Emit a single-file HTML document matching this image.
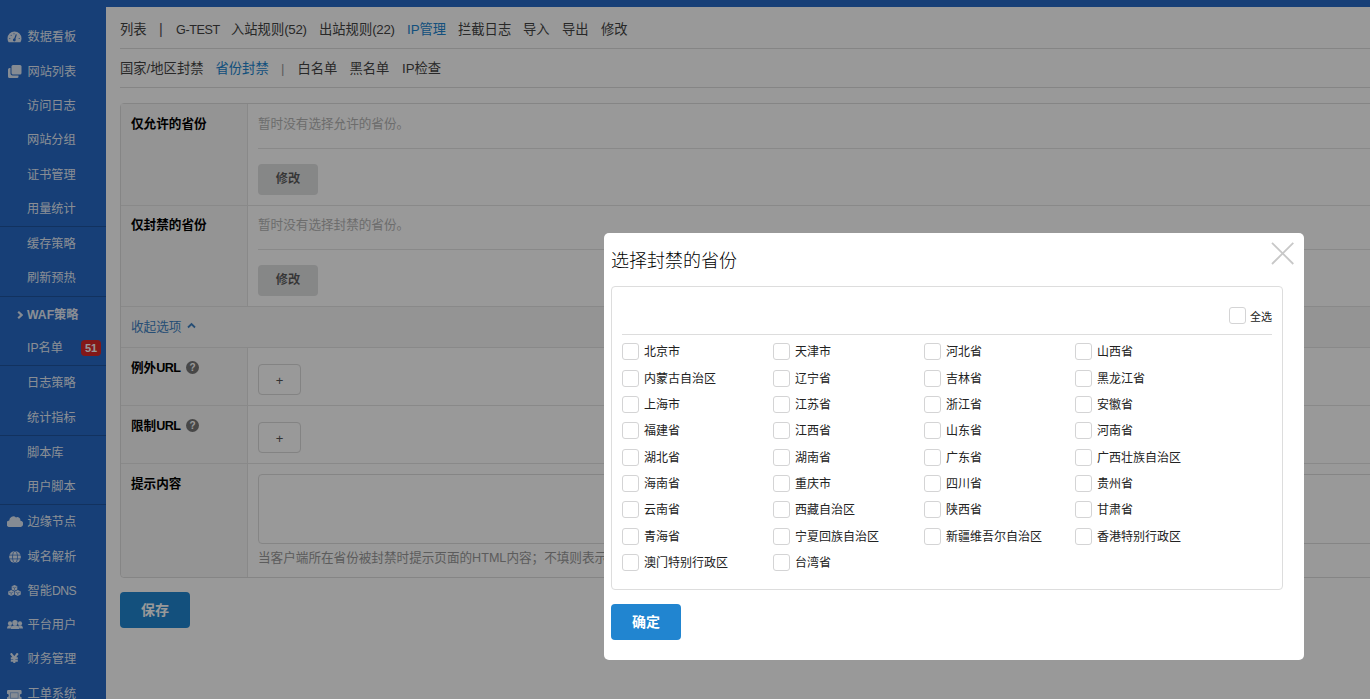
<!DOCTYPE html>
<html lang="zh-CN"><head><meta charset="utf-8"><title>省份封禁</title>
<style>
html,body{margin:0;padding:0}
body{width:1370px;height:699px;overflow:hidden;position:relative;background:#fff;font-family:"Liberation Sans","Noto Sans CJK SC",sans-serif;font-size:13px;color:#333}
.abs,.ic,.t,.ln,.cb,.bx{position:absolute}
.t{white-space:nowrap;line-height:20px;height:20px}
#top{left:0;top:0;width:1370px;height:7px;background:#276ac6}
#side{left:0;top:0;width:106px;height:699px;background:#276ac6;overflow:hidden}
#side .t{color:rgba(255,255,255,.9);font-size:12.200px;left:27.500px}
#side .ln{left:0;width:106px;height:1px;background:rgba(0,0,0,.2)}
#side .ic{opacity:.85}
#side .t.sub{left:27px}
.en{letter-spacing:-.5px}
.badge{position:absolute;left:81px;top:340px;width:20px;height:16px;border-radius:4px;background:#db2828;color:#fff;font-size:11px;font-weight:bold;line-height:16px;text-align:center}
.tab{font-size:13.300px;color:#444}
.tab.on{color:#2185d0}
.ln{background:#e4e4e4;height:1px}
.lab{font-weight:bold;color:#000;font-size:12.600px}
.ph{color:#b5b5b5;font-size:12.600px}
.btn{position:absolute;background:#e0e1e2;color:rgba(0,0,0,.6);border-radius:4px;font-size:12.200px;font-weight:bold;text-align:center}
.pbtn{position:absolute;background:#2185d0;color:#fff;border-radius:4px;font-size:14px;font-weight:bold;text-align:center}
.obtn{position:absolute;box-sizing:border-box;border:1px solid #dadada;border-radius:4px;color:#555;text-align:center;font-size:13px}
#dim{left:0;top:0;width:1370px;height:699px;background:rgba(0,0,0,.4)}
#modal{left:604px;top:233px;width:700px;height:427px;background:#fff;border-radius:5px}
.cb{box-sizing:border-box;width:17px;height:17px;border:1px solid #d4d4d5;border-radius:3px;background:#fff}
.pt{font-size:12px;color:#222}
</style></head><body>

<div id="main" class="abs" style="left:0;top:0;width:1370px;height:699px;">
<div id="top" class="abs"></div>
<div class="t tab" style="left:120px;top:20px">列表</div>
<div class="t tab" style="left:159px;top:20px;color:#555;font-size:14.500px;margin-top:-1.500px">|</div>
<div class="t tab" style="left:176px;top:20px"><span style="font-size:12.600px;letter-spacing:-.4px">G-TEST</span></div>
<div class="t tab" style="left:231px;top:20px">入站规则<span style="letter-spacing:-.3px">(52)</span></div>
<div class="t tab" style="left:319px;top:20px">出站规则<span style="letter-spacing:-.3px">(22)</span></div>
<div class="t tab on" style="left:407px;top:20px">IP管理</div>
<div class="t tab" style="left:458px;top:20px">拦截日志</div>
<div class="t tab" style="left:523px;top:20px">导入</div>
<div class="t tab" style="left:562px;top:20px">导出</div>
<div class="t tab" style="left:601px;top:20px">修改</div>
<div class="ln" style="left:120px;top:48px;width:1250px;background:#dedede"></div>
<div class="t tab" style="left:120px;top:59px">国家/地区封禁</div>
<div class="t tab on" style="left:215.5px;top:59px">省份封禁</div>
<div class="t tab" style="left:281px;top:59px;color:#999">|</div>
<div class="t tab" style="left:297.5px;top:59px">白名单</div>
<div class="t tab" style="left:349.5px;top:59px">黑名单</div>
<div class="t tab" style="left:402px;top:59px">IP检查</div>
<div class="ln" style="left:120px;top:87px;width:1250px;background:#dedede"></div>
<div class="bx" style="left:120px;top:103px;width:1300px;height:475px;box-sizing:border-box;border:1px solid #dedede;border-radius:4px"></div>
<div class="bx" style="left:121px;top:104px;width:126px;height:202px;background:#f7f7f7"></div>
<div class="bx" style="left:121px;top:348px;width:126px;height:229px;background:#f7f7f7;border-radius:0 0 0 4px"></div>
<div class="bx" style="left:121px;top:307px;width:1249px;height:40px;background:#f7f7f7"></div>
<div class="ln" style="left:247px;top:104px;width:1px;height:202px"></div>
<div class="ln" style="left:247px;top:347px;width:1px;height:230px"></div>
<div class="ln" style="left:121px;top:205px;width:1249px"></div>
<div class="ln" style="left:121px;top:306px;width:1249px"></div>
<div class="ln" style="left:121px;top:347px;width:1249px"></div>
<div class="ln" style="left:121px;top:405px;width:1249px"></div>
<div class="ln" style="left:121px;top:463px;width:1249px"></div>
<div class="t lab" style="left:131px;top:114px">仅允许的省份</div>
<div class="t ph" style="left:258px;top:114px">暂时没有选择允许的省份。</div>
<div class="ln" style="left:258px;top:148px;width:1112px"></div>
<div class="btn" style="left:258px;top:164px;width:60px;height:31px;line-height:30px">修改</div>
<div class="t lab" style="left:131px;top:215px">仅封禁的省份</div>
<div class="t ph" style="left:258px;top:215px">暂时没有选择封禁的省份。</div>
<div class="ln" style="left:258px;top:249px;width:1112px"></div>
<div class="btn" style="left:258px;top:265px;width:60px;height:31px;line-height:30px">修改</div>
<div class="t" style="left:131px;top:317px;color:#4183c4;font-size:12.600px">收起选项</div>
<svg class="ic" style="left:187px;top:322px" width="9" height="7" viewBox="0 0 9 7"><path d="M1 5.500L4.500 2 8 5.500" stroke="#4183c4" stroke-width="1.800" fill="none"/></svg>
<div class="t lab" style="left:131px;top:358px">例外<span style="letter-spacing:-.6px">URL</span></div>
<div class="abs" style="left:186px;top:361px;width:13px;height:13px;border-radius:50%;background:#777;color:#fff;font-size:10px;font-weight:bold;line-height:13px;text-align:center">?</div>
<div class="obtn" style="left:258px;top:364px;width:43px;height:31px;line-height:31px">+</div>
<div class="t lab" style="left:131px;top:416px">限制<span style="letter-spacing:-.6px">URL</span></div>
<div class="abs" style="left:186px;top:419px;width:13px;height:13px;border-radius:50%;background:#777;color:#fff;font-size:10px;font-weight:bold;line-height:13px;text-align:center">?</div>
<div class="obtn" style="left:258px;top:422px;width:43px;height:31px;line-height:31px">+</div>
<div class="t lab" style="left:131px;top:474px">提示内容</div>
<div class="bx" style="left:258px;top:474px;width:1200px;height:70px;box-sizing:border-box;border:1px solid #dedede;border-radius:4px"></div>
<div class="t" style="left:258px;top:548px;color:#999;font-size:12.600px">当客户端所在省份被封禁时提示页面的HTML内容；不填则表示使用默认提示。</div>
<div class="pbtn" style="left:120px;top:592px;width:70px;height:36px;line-height:37px">保存</div>
<div id="side" class="abs">
<div class="ln" style="top:226px"></div>
<div class="ln" style="top:296px"></div>
<div class="ln" style="top:365px"></div>
<div class="ln" style="top:435px"></div>
<div class="ln" style="top:504px"></div>
<div class="t main" style="top:27px">数据看板</div>
<svg class="ic" style="left:6.900px;top:31px" width="15" height="12" viewBox="0 0 15 12"><path d="M7.500 0.500A7 7 0 0 0 0.500 7.500c0 1.400.4 2.700 1.100 3.800h11.800c.7-1.100 1.100-2.400 1.100-3.800A7 7 0 0 0 7.500 0.500z" fill="#fff"/><path d="M7.300 9.200L9.300 3.400" stroke="#276ac6" stroke-width="1.200" fill="none"/><circle cx="7.300" cy="9" r="1.400" fill="#276ac6"/><circle cx="2.800" cy="7.500" r=".55" fill="#276ac6"/><circle cx="4.200" cy="4.200" r=".55" fill="#276ac6"/><circle cx="7" cy="2.800" r=".55" fill="#276ac6"/><circle cx="12.200" cy="7.500" r=".55" fill="#276ac6"/></svg>
<div class="t main" style="top:62px">网站列表</div>
<svg class="ic" style="left:8.300px;top:65px" width="14" height="13" viewBox="0 0 14 13"><rect x="3.500" y="0" width="10" height="9.500" rx="1.500" fill="#fff"/><path d="M2.500 3h-1A1.500 1.500 0 0 0 0 4.500v7A1.500 1.500 0 0 0 1.500 13h7.500A1.500 1.500 0 0 0 10.500 11.500v-1H4.500a2 2 0 0 1-2-2z" fill="#fff"/></svg>
<div class="t sub" style="top:96px">访问日志</div>
<div class="t sub" style="top:130px">网站分组</div>
<div class="t sub" style="top:165px">证书管理</div>
<div class="t sub" style="top:199px">用量统计</div>
<div class="t sub" style="top:234px">缓存策略</div>
<div class="t sub" style="top:268px">刷新预热</div>
<div class="t sub" style="top:305px;font-weight:bold"><span>WAF</span>策略</div>
<svg class="ic" style="left:17px;top:311px" width="6" height="8" viewBox="0 0 6 8"><path d="M1.200 0.800L4.600 4 1.200 7.200" stroke="#fff" stroke-width="2.200" fill="none"/></svg>
<div class="t sub" style="top:338px">IP名单</div>
<div class="t sub" style="top:373px">日志策略</div>
<div class="t sub" style="top:408px">统计指标</div>
<div class="t sub" style="top:443px">脚本库</div>
<div class="t sub" style="top:477px">用户脚本</div>
<div class="t main" style="top:512px">边缘节点</div>
<svg class="ic" style="left:7.400px;top:516px" width="16" height="11" viewBox="0 0 16 11"><path d="M13.400 4.800A3.200 3.200 0 0 0 9 1.400 4 4 0 0 0 2.300 4.400 3.300 3.300 0 0 0 3.300 11h9.400a3.100 3.100 0 0 0 .7-6.200z" fill="#fff"/></svg>
<div class="t main" style="top:547px">域名解析</div>
<svg class="ic" style="left:8.600px;top:550.7px" width="12" height="12" viewBox="0 0 12 12"><circle cx="6" cy="6" r="5.900" fill="#fff"/><path d="M0 4.100h12M0 7.900h12" stroke="#276ac6" stroke-width=".7"/><ellipse cx="6" cy="6" rx="2.500" ry="5.900" fill="none" stroke="#276ac6" stroke-width=".7"/></svg>
<div class="t main" style="top:581px">智能<span class="en">DNS</span></div>
<svg class="ic" style="left:8.300px;top:585px" width="13" height="11" viewBox="0 0 13 11"><path d="M6.500 0L9.300 1.300V4.500L6.500 5.800 3.700 4.500V1.300z" fill="#fff"/><path d="M3.200 5L6.200 6.400V9.600L3.200 11 .2 9.600V6.400z" fill="#fff"/><path d="M9.800 5L12.800 6.400V9.600L9.800 11 6.800 9.600V6.400z" fill="#fff"/><path d="M4.300 1.900L6.500 2.900 8.700 1.900M6.500 2.900V5M1 7L3.200 8 5.400 7M3.200 8V10.200M7.600 7L9.800 8 12 7M9.800 8V10.200" stroke="#276ac6" stroke-width=".5" fill="none"/></svg>
<div class="t main" style="top:615px">平台用户</div>
<svg class="ic" style="left:7.400px;top:619.5px" width="16" height="9.500" viewBox="0 0 16 9.500"><circle cx="8" cy="2.700" r="2.700" fill="#fff"/><path d="M3.600 9.500c0-2.800 1.800-4.200 4.400-4.200s4.400 1.400 4.400 4.200z" fill="#fff"/><circle cx="3" cy="3.400" r="2.100" fill="#fff"/><circle cx="13" cy="3.400" r="2.100" fill="#fff"/><path d="M0 8.600c0-2.300 1.300-3.400 3-3.400 .9 0 1.600.3 2.100.8-1 .8-1.500 1.800-1.600 2.600zM16 8.600c0-2.300-1.300-3.400-3-3.400-.9 0-1.600.3-2.100.8 1 .8 1.500 1.800 1.600 2.600z" fill="#fff"/></svg>
<div class="t main" style="top:649px">财务管理</div>
<svg class="ic" style="left:10.400px;top:653.4px" width="8.600" height="10" viewBox="0 0 8.600 10"><path d="M0.800 0.300L4.300 5 7.800 0.300M4.300 5v5M0.800 5.300h7M0.800 7.700h7" stroke="#fff" stroke-width="2.100" fill="none"/></svg>
<div class="t main" style="top:684px">工单系统</div>
<svg class="ic" style="left:7.400px;top:689.5px" width="14.600" height="11" viewBox="0 0 14.600 11"><path d="M0 1.200A1.200 1.200 0 0 1 1.200 0h12.200A1.200 1.200 0 0 1 14.600 1.200v2.500a1.800 1.800 0 0 0 0 3.600v2.500A1.200 1.200 0 0 1 13.400 11h-12.200A1.200 1.200 0 0 1 0 9.800V7.300a1.800 1.800 0 0 0 0-3.600z" fill="#fff"/><rect x="3.500" y="2.800" width="7.600" height="5.400" fill="none" stroke="#276ac6" stroke-width=".7" opacity=".6"/></svg>
<div class="badge">51</div>
</div>
</div>
<div id="dim" class="abs"></div>
<div id="modal" class="abs"></div>
<div class="t" style="left:611px;top:249px;font-size:18px;font-weight:300;color:#000;line-height:24px;height:24px">选择封禁的省份</div>
<svg class="ic" style="left:1270px;top:241px" width="26" height="26" viewBox="0 0 26 26"><path d="M2 1.800L23.300 23M23.300 1.800L2 23" stroke="#c8c8c8" stroke-width="1.800" fill="none"/></svg>
<div class="bx" style="left:611px;top:286px;width:672px;height:304px;box-sizing:border-box;border:1px solid #ddd;border-radius:4px"></div>
<div class="cb" style="left:1229px;top:307px"></div>
<div class="t" style="left:1250px;top:306.500px;font-size:11px;color:#222">全选</div>
<div class="ln" style="left:622px;top:334px;width:650px;background:#ddd"></div>
<div class="cb" style="left:622px;top:343px"></div><div class="t pt" style="left:644px;top:342px">北京市</div>
<div class="cb" style="left:773px;top:343px"></div><div class="t pt" style="left:795px;top:342px">天津市</div>
<div class="cb" style="left:924px;top:343px"></div><div class="t pt" style="left:946px;top:342px">河北省</div>
<div class="cb" style="left:1075px;top:343px"></div><div class="t pt" style="left:1097px;top:342px">山西省</div>
<div class="cb" style="left:622px;top:370px"></div><div class="t pt" style="left:644px;top:369px">内蒙古自治区</div>
<div class="cb" style="left:773px;top:370px"></div><div class="t pt" style="left:795px;top:369px">辽宁省</div>
<div class="cb" style="left:924px;top:370px"></div><div class="t pt" style="left:946px;top:369px">吉林省</div>
<div class="cb" style="left:1075px;top:370px"></div><div class="t pt" style="left:1097px;top:369px">黑龙江省</div>
<div class="cb" style="left:622px;top:396px"></div><div class="t pt" style="left:644px;top:395px">上海市</div>
<div class="cb" style="left:773px;top:396px"></div><div class="t pt" style="left:795px;top:395px">江苏省</div>
<div class="cb" style="left:924px;top:396px"></div><div class="t pt" style="left:946px;top:395px">浙江省</div>
<div class="cb" style="left:1075px;top:396px"></div><div class="t pt" style="left:1097px;top:395px">安徽省</div>
<div class="cb" style="left:622px;top:422px"></div><div class="t pt" style="left:644px;top:421px">福建省</div>
<div class="cb" style="left:773px;top:422px"></div><div class="t pt" style="left:795px;top:421px">江西省</div>
<div class="cb" style="left:924px;top:422px"></div><div class="t pt" style="left:946px;top:421px">山东省</div>
<div class="cb" style="left:1075px;top:422px"></div><div class="t pt" style="left:1097px;top:421px">河南省</div>
<div class="cb" style="left:622px;top:449px"></div><div class="t pt" style="left:644px;top:448px">湖北省</div>
<div class="cb" style="left:773px;top:449px"></div><div class="t pt" style="left:795px;top:448px">湖南省</div>
<div class="cb" style="left:924px;top:449px"></div><div class="t pt" style="left:946px;top:448px">广东省</div>
<div class="cb" style="left:1075px;top:449px"></div><div class="t pt" style="left:1097px;top:448px">广西壮族自治区</div>
<div class="cb" style="left:622px;top:475px"></div><div class="t pt" style="left:644px;top:474px">海南省</div>
<div class="cb" style="left:773px;top:475px"></div><div class="t pt" style="left:795px;top:474px">重庆市</div>
<div class="cb" style="left:924px;top:475px"></div><div class="t pt" style="left:946px;top:474px">四川省</div>
<div class="cb" style="left:1075px;top:475px"></div><div class="t pt" style="left:1097px;top:474px">贵州省</div>
<div class="cb" style="left:622px;top:501px"></div><div class="t pt" style="left:644px;top:500px">云南省</div>
<div class="cb" style="left:773px;top:501px"></div><div class="t pt" style="left:795px;top:500px">西藏自治区</div>
<div class="cb" style="left:924px;top:501px"></div><div class="t pt" style="left:946px;top:500px">陕西省</div>
<div class="cb" style="left:1075px;top:501px"></div><div class="t pt" style="left:1097px;top:500px">甘肃省</div>
<div class="cb" style="left:622px;top:528px"></div><div class="t pt" style="left:644px;top:527px">青海省</div>
<div class="cb" style="left:773px;top:528px"></div><div class="t pt" style="left:795px;top:527px">宁夏回族自治区</div>
<div class="cb" style="left:924px;top:528px"></div><div class="t pt" style="left:946px;top:527px">新疆维吾尔自治区</div>
<div class="cb" style="left:1075px;top:528px"></div><div class="t pt" style="left:1097px;top:527px">香港特别行政区</div>
<div class="cb" style="left:622px;top:554px"></div><div class="t pt" style="left:644px;top:553px">澳门特别行政区</div>
<div class="cb" style="left:773px;top:554px"></div><div class="t pt" style="left:795px;top:553px">台湾省</div>
<div class="pbtn" style="left:611px;top:604px;width:70px;height:36px;line-height:37px;background:#2185d0">确定</div>
</body></html>
